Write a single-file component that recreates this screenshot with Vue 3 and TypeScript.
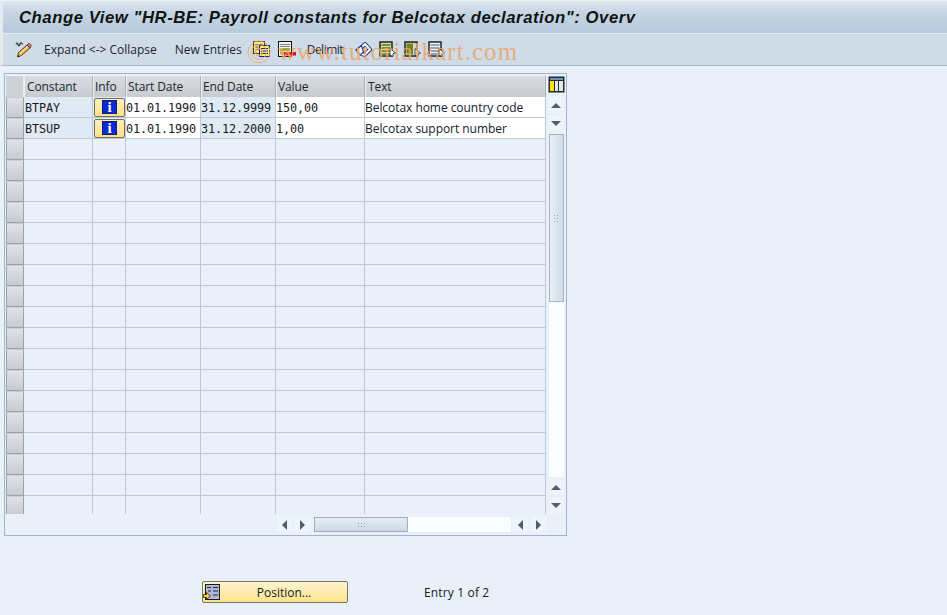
<script setup lang="ts">
interface Row { key: string; start: string; end: string; value: string; text: string }
const data: Row[] = [
  { key: 'BTPAY', start: '01.01.1990', end: '31.12.9999', value: '150,00', text: 'Belcotax home country code' },
  { key: 'BTSUP', start: '01.01.1990', end: '31.12.2000', value: '1,00', text: 'Belcotax support number' },
]
const emptyRows: number[] = Array.from({ length: 18 }, (_, i) => i)
const headers: string[] = ['Constant', 'Info', 'Start Date', 'End Date', 'Value', 'Text']
</script>

<template>
  <div class="page">
    <div class="title">Change View "HR-BE: Payroll constants for Belcotax declaration": Overv</div>

    <div class="toolbar">
      <svg class="ic first" width="17" height="17" viewBox="0 0 17 17">
        <path d="M3.500 11.500 12 4l3 3-8.500 7.500-4 1.500z" fill="#f6b648" stroke="#3a3020" stroke-width=".9" stroke-linejoin="round"/>
        <path d="M12 4l1.300-1.200c.6-.5 1.300-.4 1.800.1l.7.8c.5.6.4 1.200 0 1.700L15 7z" fill="#e8728c" stroke="#3a3020" stroke-width=".8"/>
        <path d="M5 12.500l8-7" stroke="#fff0c8" stroke-width="1"/>
        <path d="M2.500 16l.6-2 1.400 1.300z" fill="#222"/>
        <path d="M1 3.500c.8-2 1.700-2 2 0s1.500 1.500 2-.5 1.800-1.500 2.500.5" fill="none" stroke="#2a2a2a" stroke-width="1.100"/>
      </svg>
      <span class="tb expand">Expand &lt;-&gt; Collapse</span>
      <span class="tb entries">New Entries</span>
      <svg class="ic copy" width="17" height="16" viewBox="0 0 17 16">
        <rect x=".5" y=".5" width="11" height="12" fill="#ffe27a" stroke="#3c3410"/>
        <path d="M2.500 3.500h7M2.500 6h3M2.500 8.500h3" stroke="#5c5220"/>
        <rect x="6.500" y="4.500" width="10" height="11" fill="#fff06a" stroke="#14209a"/>
        <path d="M8 7.500h7M8 10h7M8 12.500h7" stroke="#14209a"/>
      </svg>
      <svg class="ic del" width="18" height="16" viewBox="0 0 18 16">
        <rect x=".5" y=".5" width="13" height="15" fill="#f4f4ec" stroke="#141414"/>
        <path d="M2 3.500h10M2 5.500h10" stroke="#7d858c"/>
        <rect x="2" y="7" width="10" height="3" fill="#8fb03a"/>
        <rect x="2" y="10.500" width="4" height="3" fill="#9fc04a"/>
        <rect x="6" y="11" width="12" height="3.500" fill="#e01010"/>
      </svg>
      <span class="tb delimit">Delimit</span>
      <svg class="ic undo" width="17" height="16" viewBox="0 0 17 16">
        <path d="M5.500 12.500 9.500 14 15 8.500 10 3 6 7" fill="none" stroke="#1e2e94" stroke-width="4" stroke-linejoin="round"/>
        <path d="M5.500 12.500 9.500 14 15 8.500 10 3 6 7" fill="none" stroke="#fff" stroke-width="2" stroke-linejoin="round"/>
        <path d="M.8 9 6.500 4.500 8.500 11 5 14z" fill="#fff" stroke="#1e2e94" stroke-width="1.100" stroke-linejoin="round"/>
        <path d="M1.500 10 5 14" stroke="#d8901e" stroke-width="1.300"/>
      </svg>
      <svg class="ic sel1" width="17" height="16" viewBox="0 0 17 16">
        <rect x="1" y="1" width="12" height="14" fill="#d5dfae" stroke="#141414" stroke-width="1.400"/>
        <path d="M2.500 4h9M2.500 7h9M2.500 10h9M2.500 13h9" stroke="#5d7414" stroke-width="1.600"/>
        <path d="M11 7.500l5.500 4.500-2.500.5v3l-3-1.500z" fill="#fff" stroke="#222" stroke-width=".8"/>
      </svg>
      <svg class="ic sel2" width="17" height="16" viewBox="0 0 17 16">
        <rect x="1" y="1" width="12" height="14" fill="#d8dbd0" stroke="#141414" stroke-width="1.400"/>
        <rect x="2.500" y="2.500" width="6.500" height="11" fill="#6f8416"/>
        <path d="M11 7.500l5.500 4.500-2.500.5v3l-3-1.500z" fill="#fff" stroke="#222" stroke-width=".8"/>
      </svg>
      <svg class="ic sel3" width="17" height="16" viewBox="0 0 17 16">
        <rect x="1" y="1" width="12" height="14" fill="#f3f6f9" stroke="#141414" stroke-width="1.400"/>
        <path d="M2.500 4h9M2.500 7h9M2.500 10h9M2.500 13h9" stroke="#71869b" stroke-width="1.500"/>
        <path d="M11 7.500l5.500 4.500-2.500.5v3l-3-1.500z" fill="#fff" stroke="#222" stroke-width=".8"/>
      </svg>
    </div>

    <div class="content">
      <section class="panel">
        <div class="upper">
          <div class="grid">
            <div class="row head">
              <div class="rh headrh"></div>
              <div v-for="h in headers" :key="h" class="hc">{{ h }}</div>
            </div>
            <div v-for="r in data" :key="r.key" class="row">
              <div class="rh"></div>
              <div class="c key mono">{{ r.key }}</div>
              <div class="c info">
                <button class="infobtn" type="button" aria-label="Info"><span class="i">i</span></button>
              </div>
              <div class="c w mono">{{ r.start }}</div>
              <div class="c w mono">{{ r.end }}</div>
              <div class="c w mono">{{ r.value }}</div>
              <div class="c w sans">{{ r.text }}</div>
            </div>
            <div v-for="n in emptyRows" :key="n" class="row">
              <div class="rh"></div>
              <div v-for="h in headers" :key="h" class="c"></div>
            </div>
          </div>

          <div class="vbar">
            <svg class="cfg" width="17" height="17" viewBox="0 0 17 17">
              <rect x=".5" y=".5" width="16" height="16" fill="#23292f"/>
              <rect x="2" y="5" width="4" height="10" fill="#ffe600"/>
              <rect x="7" y="5" width="3" height="10" fill="#e8e8e8"/>
              <rect x="11" y="5" width="4" height="10" fill="#e8e8e8"/>
              <rect x="2" y="2" width="13" height="2" fill="#6f93b5"/>
            </svg>
            <div class="sbtn first-btn"><i class="tri up"></i></div>
            <div class="sbtn"><i class="tri down"></i></div>
            <div class="vtrack">
              <div class="vthumb"><span class="vgrip"></span></div>
            </div>
            <div class="sbtn"><i class="tri up"></i></div>
            <div class="sbtn"><i class="tri down"></i></div>
          </div>
        </div>

        <div class="hbar">
          <div class="sbtn h"><i class="tri left"></i></div>
          <div class="sbtn h"><i class="tri right"></i></div>
          <div class="htrack">
            <div class="hthumb"><span class="hgrip"></span></div>
          </div>
          <div class="sbtn h"><i class="tri left"></i></div>
          <div class="sbtn h"><i class="tri right"></i></div>
        </div>
      </section>

      <div class="footer">
        <button class="pos" type="button">
          <svg class="posic" width="17" height="17" viewBox="0 0 17 17">
            <rect x="2.500" y=".5" width="14" height="15" fill="#aeb9dc" stroke="#1a1a1a"/>
            <path d="M4 3.500h4M5 7h3M10 3.500h5M10 7h5M10 11h5" stroke="#222"/>
            <path d="M.5 10.500h3V8.500l4 3.500-4 3.500v-2h-3z" fill="#ffd21e" stroke="#222" stroke-width=".8"/>
          </svg>
          <span>Position...</span>
        </button>
        <span class="entry">Entry 1 of 2</span>
      </div>
    </div>

    <div class="mark" aria-hidden="true">
      <svg width="24" height="24" viewBox="0 0 24 24">
        <circle cx="12" cy="12" r="11" fill="none" stroke="#e8ab72" stroke-width="1"/>
        <circle cx="12" cy="12" r="7.500" fill="none" stroke="#e8ab72" stroke-width="1"/>
        <circle cx="12" cy="12" r="3.500" fill="none" stroke="#e8ab72" stroke-width="1.500"/>
      </svg>
      <span>www.tutorialkart.com</span>
    </div>
  </div>
</template>

<style>
html, body { margin: 0; padding: 0; background: #e9f0f7; overflow: hidden; }
</style>

<style scoped>
.page {
  position: relative;
  width: 947px;
  height: 615px;
  background: #e9f0f7;
  font-family: "Open Sans", "Noto Sans", sans-serif;
  font-size: 12px;
  color: #111;
  overflow: hidden;
  display: flex;
  flex-direction: column;
}
.title {
  height: 33px;
  box-sizing: border-box;
  padding: 7px 0 0 16px;
  font-family: "Liberation Sans", sans-serif;
  font-weight: 700;
  font-style: italic;
  font-size: 16.7px;
  letter-spacing: 0.55px;
  line-height: 19px;
  color: #10130f;
  white-space: nowrap;
  overflow: hidden;
  background: linear-gradient(#dde7f0 0, #c4d4e3 40%, #b7cadc 100%);
  border-top: 1px solid #eef3f8;
  border-left: 3px solid #e4eaf1;
}
.toolbar {
  height: 33px;
  box-sizing: border-box;
  display: flex;
  align-items: center;
  background: #cfdce8;
  border-top: 1px solid #e3ebf2;
  border-bottom: 1px solid #a9bccf;
  border-left: 3px solid #e4eaf1;
  position: relative;
}
.ic { flex: none; display: block; margin-top: -1px; }
.ic.first { margin-left: 12px; }
.tb { color: #1b2430; white-space: nowrap; font-size: 12px; letter-spacing: 0; }
.expand { margin-left: 12px; }
.entries { margin-left: 18px; }
.ic.copy { margin-left: 11px; }
.ic.del { margin-left: 8px; }
.delimit { margin-left: 11px; letter-spacing: -0.5px; }
.ic.undo { margin-left: 12px; }
.ic.sel1 { margin-left: 7px; }
.ic.sel2 { margin-left: 8px; }
.ic.sel3 { margin-left: 7px; }

.content { flex: 1; display: flex; flex-direction: column; padding: 7px 0 0 4px; }
.panel {
  width: 563px;
  height: 463px;
  box-sizing: border-box;
  border: 1px solid #9db5cd;
  padding: 2px 0 0 1px;
  display: flex;
  flex-direction: column;
}
.upper { display: flex; height: 438px; }
.grid { width: 540px; height: 438px; overflow: hidden; flex: none; }
.row {
  display: grid;
  grid-template-columns: 18px 69px 33px 75px 75px 89px 181px;
  height: 21px;
}
.rh {
  box-sizing: border-box;
  background: linear-gradient(#dfe3e7, #c6cbd1);
  border: 1px solid #9aa3ad;
  border-top: 1px solid #c9ced4;
}
.headrh { background: #cdd2d7; border: 0; border-right: 1px solid #eef1f4; }
.hc {
  box-sizing: border-box;
  background: linear-gradient(#dadde1, #c8ccd2);
  padding: 2px 0 0 1px;
  line-height: 17px;
  border-left: 1px solid #eef1f4;
  border-right: 1px solid #aab1b9;
  color: #1c2530;
  white-space: nowrap;
  overflow: hidden;
  letter-spacing: -0.1px;
}
.hc:nth-child(2), .hc:nth-child(7) { padding-left: 2px; }
.c {
  box-sizing: border-box;
  border-right: 1px solid #bfc9d5;
  border-bottom: 1px solid #bfc9d5;
  line-height: 22px;
  white-space: nowrap;
  overflow: hidden;
}
.key { background: #dfeaf4; padding-left: 1px; }
.info { background: #dfeaf4; padding: 1px 0 0 1px; }
.w { background: #fff; padding-left: 0; }
.mono { font-family: "DejaVu Sans Mono", "Liberation Mono", monospace; font-size: 11.8px; letter-spacing: -0.1px; color: #1a1a1a; }
.sans { color: #14202c; letter-spacing: -0.05px; }
.w:nth-child(5) { background: #dfeaf4; }
.infobtn {
  display: flex;
  align-items: center;
  justify-content: center;
  width: 31px;
  height: 19px;
  margin: 0;
  padding: 0;
  box-sizing: border-box;
  border: 1px solid #6f6f66;
  border-radius: 2px;
  background: linear-gradient(#fbf0bf, #ffe08a);
}
.i {
  display: block;
  width: 15px;
  height: 14px;
  margin-top: -2px;
  background: #0a2ad8;
  border: 1px solid #10206a;
  box-sizing: border-box;
  color: #fff;
  font-family: "Liberation Serif", serif;
  font-weight: 700;
  font-size: 15px;
  line-height: 12px;
  text-align: center;
}

.vbar {
  width: 18px;
  margin-left: 1px;
  display: flex;
  flex-direction: column;
  align-items: center;
  flex: none;
}
.cfg { display: block; flex: none; margin-bottom: 3px; }
.sbtn {
  width: 15px;
  height: 15px;
  margin-bottom: 3px;
  background: #eff4f8;
  display: flex;
  align-items: center;
  justify-content: center;
  flex: none;
}
.sbtn.h { margin: 0 3px 0 0; }
.first-btn { margin-top: 1px; height: 16px; }
.tri { display: block; width: 0; height: 0; border-style: solid; border-color: transparent; }
.tri.up { border-width: 0 5px 5px; border-bottom-color: #4e5f70; }
.tri.down { border-width: 5px 5px 0; border-top-color: #4e5f70; }
.tri.left { border-width: 5px 5px 5px 0; border-right-color: #4e5f70; }
.tri.right { border-width: 5px 0 5px 5px; border-left-color: #4e5f70; }
.vtrack {
  width: 15px;
  height: 343px;
  margin-bottom: 3px;
  background: #fbfcfd;
  flex: none;
}
.vthumb {
  box-sizing: border-box;
  width: 15px;
  height: 168px;
  border: 1px solid #aab4bf;
  background: linear-gradient(90deg, #e9f0f6, #cfdbe6);
  display: flex;
  align-items: center;
  justify-content: center;
}
.vgrip, .hgrip {
  display: block;
  background-image: radial-gradient(circle, #9aa7b4 1px, transparent 1px);
  background-size: 3px 3px;
}
.vgrip { width: 6px; height: 9px; }
.hgrip { width: 9px; height: 6px; }
.hbar { display: flex; align-items: center; height: 15px; margin-top: 3px; padding-left: 271px; }
.htrack {
  width: 197px;
  height: 15px;
  margin-right: 2px;
  margin-left: 1px;
  background: #fbfcfd;
  flex: none;
}
.hthumb {
  box-sizing: border-box;
  width: 94px;
  height: 15px;
  border: 1px solid #a6adb5;
  background: linear-gradient(#e6eef5, #cdd9e4);
  display: flex;
  align-items: center;
  justify-content: center;
}
.footer { display: flex; align-items: center; margin-top: 45px; padding-left: 198px; }
.pos {
  position: relative;
  width: 146px;
  height: 22px;
  box-sizing: border-box;
  border: 1px solid #77766c;
  border-radius: 2px;
  margin: 0;
  padding: 0 0 0 18px;
  background: linear-gradient(#fdf5cf, #ffe38c);
  font-family: inherit;
  font-size: 12px;
  color: #14202c;
  text-align: center;
}
.posic { position: absolute; left: 0; top: 2px; }
.entry { margin-left: 76px; color: #14202c; white-space: nowrap; letter-spacing: 0.15px; }

.mark {
  position: absolute;
  left: 247px;
  top: 40px;
  display: flex;
  align-items: center;
  gap: 7px;
  pointer-events: none;
  opacity: .85;
}
.mark span {
  font-family: "Liberation Serif", serif;
  font-size: 25px;
  line-height: 24px;
  letter-spacing: 1.05px;
  color: #e8a76d;
  white-space: nowrap;
}
</style>
